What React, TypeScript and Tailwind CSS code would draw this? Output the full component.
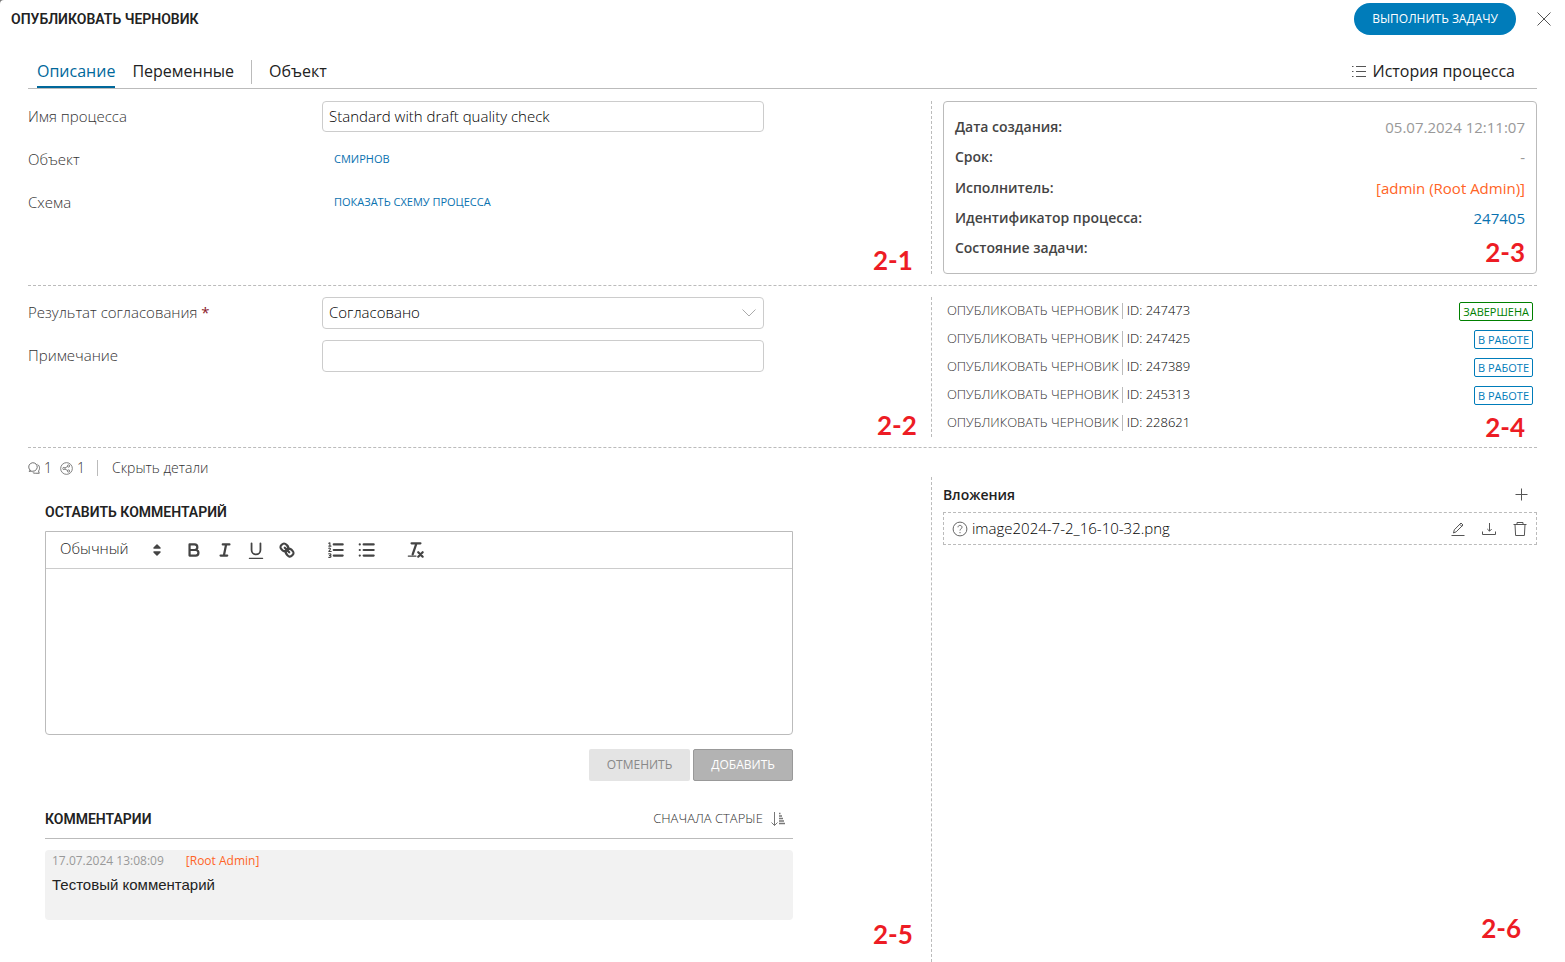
import { ReactNode } from "react";

const tasks = [
  { id: "247473", status: "Завершена", done: true },
  { id: "247425", status: "В работе", done: false },
  { id: "247389", status: "В работе", done: false },
  { id: "245313", status: "В работе", done: false },
  { id: "228621", status: "", done: false },
];

const details = [
  { label: "Дата создания:", value: "05.07.2024 12:11:07", color: "text-[#999]" },
  { label: "Срок:", value: "-", color: "text-[#999]" },
  { label: "Исполнитель:", value: "[admin (Root Admin)]", color: "text-[#ff6426]" },
  { label: "Идентификатор процесса:", value: "247405", color: "text-[#0a72b0]", href: "#process" },
  { label: "Состояние задачи:", value: "", color: "text-[#999]" },
];

const Icon = (props: { size?: string; box?: string; children: ReactNode }) => (
  <svg
    viewBox={props.box ?? "0 0 16 16"}
    className={`${props.size ?? "size-4"} shrink-0`}
    fill="none"
    stroke="currentColor"
    aria-hidden="true"
  >
    {props.children}
  </svg>
);

const QuillIcon = (props: { children: ReactNode }) => (
  <svg
    viewBox="0 0 18 18"
    className="size-5"
    fill="none"
    stroke="currentColor"
    strokeWidth="2"
    strokeLinecap="round"
    strokeLinejoin="round"
    aria-hidden="true"
  >
    {props.children}
  </svg>
);

const ToolButton = (props: { label: string; className?: string; children: ReactNode }) => (
  <button type="button" aria-label={props.label} className={`flex w-[31px] justify-center ${props.className ?? ""}`}>
    <QuillIcon>{props.children}</QuillIcon>
  </button>
);

const Marker = (props: { className: string; children: ReactNode }) => (
  <span className={`absolute font-[Lato,sans-serif] text-[26px] leading-8 font-bold text-[#ed1c24] ${props.className}`}>
    {props.children}
  </span>
);

const Row = (props: { className?: string; left: ReactNode; right: ReactNode }) => (
  <section className={`grid grid-cols-[59.9%_1fr] ${props.className ?? ""}`}>
    {props.left}
    <div className="relative min-w-0 pl-[11px]">{props.right}</div>
  </section>
);

const Heading = (props: { children: ReactNode }) => (
  <h2 className="font-[Roboto,sans-serif] text-sm leading-5 font-semibold text-[#222] uppercase">{props.children}</h2>
);

const Header = () => (
  <header className="flex h-[38px] items-center justify-between pr-3.5 pl-[11px]">
    <h1 className="font-[Roboto,sans-serif] text-sm leading-5 font-semibold text-[#222] uppercase">
      Опубликовать черновик
    </h1>
    <div className="flex items-center gap-[21px]">
      <button type="button" className="h-8 rounded-full bg-[#007cba] px-[18px] text-xs text-white uppercase">
        Выполнить задачу
      </button>
      <button type="button" aria-label="Закрыть" className="text-[#555]">
        <Icon size="size-3.5" box="0 0 14 14">
          <path d="M.5.5l13 13M13.5.5l-13 13" />
        </Icon>
      </button>
    </div>
  </header>
);

const Tabs = () => (
  <nav className="mx-7 flex h-[51px] items-end border-b border-[#bbb] pl-[9px] text-base text-[#222]">
    <a href="#description" className="mr-[17px] border-b-2 border-[#00689b] pb-[3px] text-[#00689b]">
      Описание
    </a>
    <a href="#variables" className="border-b-2 border-transparent pb-[3px]">
      Переменные
    </a>
    <span className="mx-[17px] mb-1 h-6 w-px bg-[#bbb]" />
    <a href="#object" className="border-b-2 border-transparent pb-[3px]">
      Объект
    </a>
    <a href="#history" className="mr-[22px] ml-auto flex items-center gap-1.5 border-b-2 border-transparent pb-[3px]">
      <Icon size="size-3.5" box="0 0 14 14">
        <path d="M4 2.5h10M4 7.5h10M4 12.5h10" stroke="#555" />
        <path d="M0 2.5h1.5M0 7.5h1.5M0 12.5h1.5" stroke="#555" />
      </Icon>
      История процесса
    </a>
  </nav>
);

const labelClass = "w-[294px] shrink-0 pb-px text-[15px] font-light text-[#333]";
const fieldClass = "w-full rounded border border-[#ccc] bg-white px-1.5 pb-0.5 text-[15px] font-light text-black";

const ProcessForm = () => (
  <div className="relative flex flex-col gap-3 border-r border-dashed border-[#bbb]">
    <div className="flex h-[31px] items-center">
      <label htmlFor="process-name" className={labelClass}>
        Имя процесса
      </label>
      <div className="w-[49%]">
        <input
          id="process-name"
          className={`${fieldClass} block h-[31px]`}
          defaultValue="Standard with draft quality check"
        />
      </div>
    </div>
    <div className="flex h-[31px] items-center">
      <span className={labelClass}>Объект</span>
      <a href="#smirnov" className="pl-3 text-[11px] text-[#0a72b0] uppercase">
        Смирнов
      </a>
    </div>
    <div className="flex h-[31px] items-center">
      <span className={labelClass}>Схема</span>
      <a href="#scheme" className="pl-3 text-[11px] text-[#0a72b0] uppercase">
        Показать схему процесса
      </a>
    </div>
    <Marker className="right-[18px] -bottom-0.5">2-1</Marker>
  </div>
);

const ResultForm = () => (
  <div className="relative flex flex-col gap-[11px] border-r border-dashed border-[#bbb]">
    <div className="flex h-8 items-center">
      <label htmlFor="result" className={labelClass}>
        Результат согласования <span className="font-normal text-[#8b1a2b]">*</span>
      </label>
      <div className="relative w-[49%]">
        <select id="result" className={`${fieldClass} block h-8 appearance-none`}>
          <option>Согласовано</option>
        </select>
        <svg
          viewBox="0 0 14 8"
          className="pointer-events-none absolute top-3 right-2 h-2 w-3.5"
          fill="none"
          stroke="#aaa"
          aria-hidden="true"
        >
          <path d="M.5.5L7 7 13.5.5" />
        </svg>
      </div>
    </div>
    <div className="flex h-8 items-center">
      <label htmlFor="note" className={labelClass}>
        Примечание
      </label>
      <div className="w-[49%]">
        <input id="note" className={`${fieldClass} block h-8`} />
      </div>
    </div>
    <Marker className="right-3.5 -bottom-1">2-2</Marker>
  </div>
);

const DetailsCard = () => (
  <>
    <dl className="flex h-full flex-col justify-between rounded border border-[#bbb] px-[11px] py-[15px] text-[15px] leading-5">
      {details.map((item) => (
        <div key={item.label} className="flex justify-between">
          <dt className="text-sm leading-5 font-semibold text-[#444]">{item.label}</dt>
          <dd className={item.color}>{item.href ? <a href={item.href}>{item.value}</a> : item.value}</dd>
        </div>
      ))}
    </dl>
    <Marker className="right-3 bottom-1.5">2-3</Marker>
  </>
);

const TaskList = () => (
  <>
    <ul className="flex flex-col pr-1 pl-1 text-[13px] font-light text-[#333]">
      {tasks.map((task) => (
        <li key={task.id} className="flex h-7 items-center">
          <a href="#task" className="uppercase">
            Опубликовать черновик
          </a>
          <span className="mr-1 ml-[3px] h-4 w-px bg-[#bbb]" />
          <span className="text-black">ID: {task.id}</span>
          {task.status && (
            <span
              className={`ml-auto rounded-xs border px-[3px] text-[11px] leading-[17px] font-normal uppercase ${
                task.done ? "border-[#008000] text-[#008000]" : "border-[#007cba] text-[#007cba]"
              }`}
            >
              {task.status}
            </span>
          )}
        </li>
      ))}
    </ul>
    <Marker className="right-3 -bottom-1.5">2-4</Marker>
  </>
);

const Toolbar = () => (
  <div className="flex h-[37px] items-center border-b border-[#ccc] pl-3.5 text-[#444]">
    <div className="relative mr-3">
      <select
        aria-label="Стиль текста"
        className="block w-[106px] appearance-none pb-1 text-[15px] font-light text-[#222]"
      >
        <option>Обычный</option>
      </select>
      <svg viewBox="0 0 18 18" className="pointer-events-none absolute top-1 right-0 size-[18px]" aria-hidden="true">
        <path d="M6 7L9 4l3 3zM6 11l3 3 3-3z" fill="#444" stroke="#444" strokeWidth="1.5" strokeLinejoin="round" />
      </svg>
    </div>
    <ToolButton label="Полужирный">
      <path d="M5 4h4.5a2.5 2.5 0 010 5H5zM5 9h5.5a2.5 2.5 0 010 5H5z" />
    </ToolButton>
    <ToolButton label="Курсив">
      <path d="M7 4h6M5 14h6M8 14l2-10" />
    </ToolButton>
    <ToolButton label="Подчёркнутый">
      <path d="M5 3v6a4 4 0 008 0V3" strokeWidth="1.6" />
      <path d="M3 16.5h12" strokeWidth="1" />
    </ToolButton>
    <ToolButton label="Ссылка">
      <path d="M7 7l4 4" />
      <path d="M8.9 4.577a3.476 3.476 0 01.36 4.679A3.476 3.476 0 014.577 8.9C3.185 7.5 2.035 6.4 4.217 4.217S7.5 3.185 8.9 4.577z" />
      <path d="M13.423 9.1a3.476 3.476 0 00-4.679-.36 3.476 3.476 0 00.36 4.679c1.392 1.392 2.5 2.542 4.679.36s1.032-3.279-.36-4.679z" />
    </ToolButton>
    <ToolButton label="Нумерованный список" className="ml-[18px]">
      <path d="M7 4h8M7 9h8M7 14h8" />
      <path
        d="M2.5 5.5h2M3.5 5.5v-3l-1 .5M2.5 7.5c2-.6 2 .8 0 2.8h2.2M2.5 12.5c2.5-.6 2.5 1.5.6 1.5 1.9 0 1.9 2.1-.6 1.6"
        strokeWidth="1"
      />
    </ToolButton>
    <ToolButton label="Маркированный список">
      <path d="M6 4h9M6 9h9M6 14h9" />
      <path d="M2.5 4h0M2.5 9h0M2.5 14h0" />
    </ToolButton>
    <ToolButton label="Очистить форматирование" className="ml-[18px]">
      <path d="M5 3h8M6 13L9.4 3" />
      <path d="M11 11l4 4M15 11l-4 4" />
      <path d="M2 14.5h7" strokeWidth="1" />
    </ToolButton>
  </div>
);

const Comments = () => (
  <div className="mr-[138px] ml-[17px]">
    <Heading>Оставить комментарий</Heading>
    <div className="mt-[9px] rounded-b border border-[#bbb]">
      <Toolbar />
      <textarea
        aria-label="Комментарий"
        className="block h-[165px] w-full resize-none p-3 text-sm text-[#222] outline-none"
      />
    </div>
    <div className="mt-3.5 flex justify-end gap-[3px] text-xs">
      <button type="button" className="h-8 rounded-xs bg-[#e4e4e4] px-[18px] text-[#888] uppercase">
        Отменить
      </button>
      <button type="button" className="h-8 rounded-xs border border-[#999] bg-[#b3b3b3] px-[17px] text-white uppercase">
        Добавить
      </button>
    </div>
    <div className="mt-7 flex h-[30px] justify-between border-b border-[#bbb]">
      <Heading>Комментарии</Heading>
      <button type="button" className="mr-2 flex h-5 items-center gap-2 text-[13px] font-light text-[#333] uppercase">
        Сначала старые
        <Icon size="size-3.5" box="0 0 14 14">
          <path d="M3.5 0v13.5M.5 10.5l3 3 3-3" stroke="#777" />
          <path d="M8 1.5h1.5M8 4h3M8 6.5h4M8 9h5M8 11.5h6" stroke="#777" strokeWidth="1.6" />
        </Icon>
      </button>
    </div>
    <article className="mt-[11px] h-[70px] rounded bg-[#f2f2f2] px-[7px] pt-0.5">
      <p className="flex gap-[22px] text-xs leading-[18px] text-[#999]">
        <time>17.07.2024 13:08:09</time>
        <span className="text-[#ff6426]">[Root Admin]</span>
      </p>
      <p className="mt-[3px] font-['Liberation_Sans',sans-serif] text-[15px] leading-6 text-[#222]">
        Тестовый комментарий
      </p>
    </article>
  </div>
);

const Discussion = () => (
  <div className="relative border-r border-dashed border-[#bbb] pt-[25px]">
    <Comments />
    <Marker className="right-[18px] bottom-3">2-5</Marker>
  </div>
);

const Counters = () => (
  <div className="mx-7 flex h-[29px] items-end pb-px text-sm leading-4 font-light text-[#333]">
    <span className="flex items-center gap-1">
      <Icon size="size-3" box="0 0 13 13">
        <path d="M2.8 9.2A4.6 4.6 0 115.3 10H1zM10.3 2.5c2.6 1.8 2.8 5.2 1.1 7.2l.8 2.5H8c-1.2 0-2-.2-2.8-.7" stroke="#666" />
      </Icon>
      1
    </span>
    <span className="ml-2 flex items-center gap-1">
      <Icon size="size-[13px]" box="0 0 14 14">
        <g stroke="#777">
          <circle cx="7" cy="7" r="6.3" />
          <circle cx="4.2" cy="7" r="1.2" />
          <circle cx="9.2" cy="4.3" r="1.2" />
          <circle cx="9.2" cy="9.7" r="1.2" />
          <path d="M5.3 6.4l2.8-1.5M5.3 7.6l2.8 1.5" />
        </g>
      </Icon>
      1
    </span>
    <span className="mr-3.5 ml-3 h-4 w-px bg-[#bbb]" />
    <button type="button">Скрыть детали</button>
  </div>
);

const Attachments = () => (
  <div className="pt-2">
    <div className="flex h-[27px] items-start justify-between pr-[9px]">
      <h2 className="text-sm leading-5 font-semibold text-[#222]">Вложения</h2>
      <button type="button" aria-label="Добавить вложение" className="mt-[3px] text-[#555]">
        <Icon size="size-[13px]" box="0 0 13 13">
          <path d="M6.5.5v12M.5 6.5h12" />
        </Icon>
      </button>
    </div>
    <div className="flex h-[33px] items-center border border-dashed border-[#bbb] px-2 text-[15px] font-light text-black">
      <span className="mr-1 text-[#666]">
        <Icon>
          <circle cx="8" cy="8" r="6.9" />
          <path d="M6 6.3c0-2.6 4-2.5 4 0 0 1.6-2 1.3-2 3.2M8 11v1.2" />
        </Icon>
      </span>
      <a href="#file">image2024-7-2_16-10-32.png</a>
      <div className="ml-auto flex gap-[15px] text-[#555]">
        <button type="button" aria-label="Переименовать">
          <Icon>
            <path d="M1.5 14.5h13M3.5 12l.8-3.2L11 2l2 2-6.8 6.8zM9.8 3.3l2 2" />
          </Icon>
        </button>
        <button type="button" aria-label="Скачать">
          <Icon>
            <path d="M1.5 10.5v3h13v-3M8.5 2v8M6.3 8l2.2 2.2L10.7 8" />
          </Icon>
        </button>
        <button type="button" aria-label="Удалить">
          <Icon>
            <path d="M1.5 3.5h13M5 3.5v-2h6v2M3 3.5l.6 11h8.8l.6-11" />
          </Icon>
        </button>
      </div>
    </div>
    <Marker className="right-4 bottom-[18px]">2-6</Marker>
  </div>
);

export default function App() {
  return (
    <div className="bg-[#777]">
      <main className="flex min-h-screen flex-col rounded-tl-sm bg-white font-['Open_Sans',sans-serif]">
        <Header />
        <Tabs />
        <Row className="mx-7 mt-3 min-h-[173px]" left={<ProcessForm />} right={<DetailsCard />} />
        <hr className="mx-7 mt-[11px] border-dashed border-[#bbb]" />
        <Row className="mx-7 mt-[11px] min-h-[138px]" left={<ResultForm />} right={<TaskList />} />
        <hr className="mx-7 mt-2.5 border-dashed border-[#bbb]" />
        <Counters />
        <Row className="mx-7 flex-1" left={<Discussion />} right={<Attachments />} />
      </main>
    </div>
  );
}
